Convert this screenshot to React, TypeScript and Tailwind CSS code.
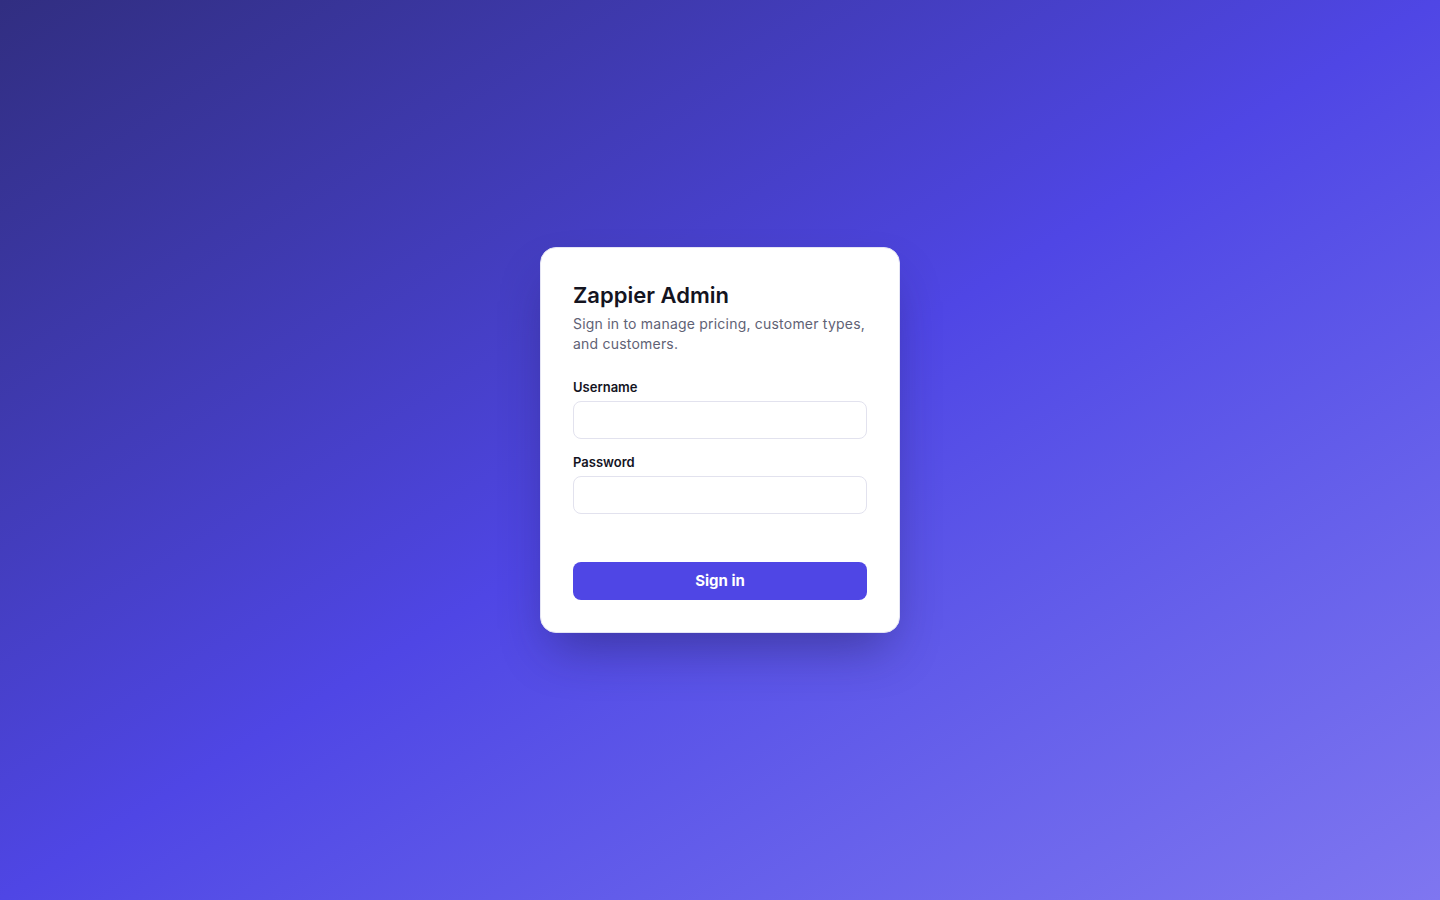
import React from 'react';

const App: React.FC = () => {
	return (
		<div
			className="min-h-screen w-full flex items-center justify-center pb-5 bg-linear-to-br from-[#312e81] via-[#4f46e5] to-[#7f76f0]"
			style={{ fontFamily: 'Inter, "Noto Sans", sans-serif' }}
		>
			<div className="w-[360px] bg-white rounded-2xl border border-[#e4e4f4] p-8 shadow-[0_25px_50px_-12px_rgba(30,27,75,0.45)]">
				<h1 className="pt-px text-[22px] leading-7 font-semibold text-[#14141f]">Zappier Admin</h1>
				<p className="mt-[5px] text-[14px] leading-5 tracking-[0.015em] text-[#5f6275]">
					Sign in to manage pricing, customer types, and customers.
				</p>
				<form className="mt-[23px]" onSubmit={(e) => e.preventDefault()}>
					<label className="block text-[13px] leading-5 font-semibold text-[#14141f]">Username</label>
					<input
						type="text"
						className="mt-1 block w-full h-[38px] rounded-lg border border-[#e2e2ee] bg-white px-3 text-sm outline-none"
					/>
					<label className="mt-[13px] block text-[13px] leading-5 font-semibold text-[#14141f]">Password</label>
					<input
						type="password"
						className="mt-1 block w-full h-[38px] rounded-lg border border-[#e2e2ee] bg-white px-3 text-sm outline-none"
					/>
					<button
						type="submit"
						className="mt-12 w-full h-[38px] rounded-lg bg-[#4f46e5] text-white text-[15px] font-bold"
					>
						Sign in
					</button>
				</form>
			</div>
		</div>
	);
};

export default App;
